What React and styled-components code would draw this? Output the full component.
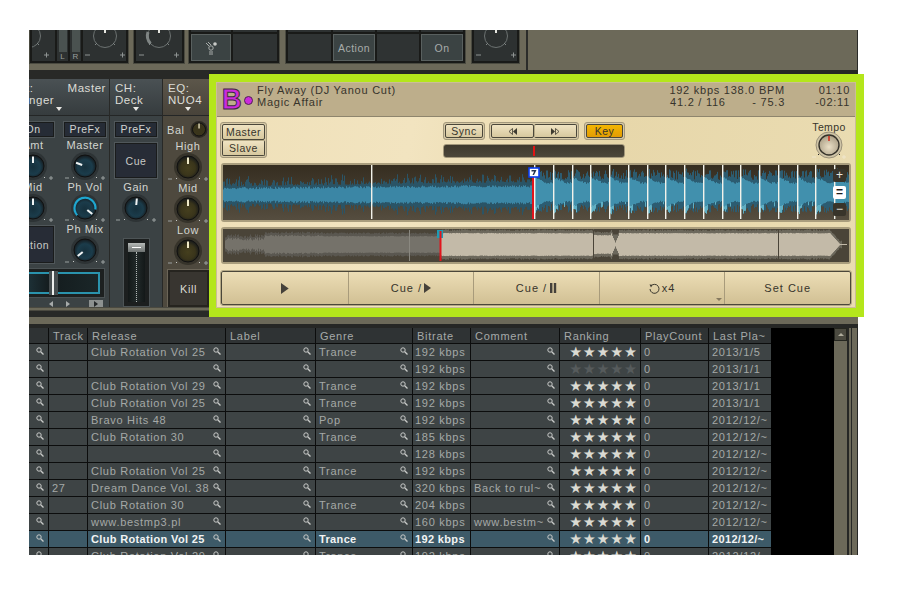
import React, { useMemo } from 'react';
import styled, { createGlobalStyle } from 'styled-components';

const GlobalStyle = createGlobalStyle`
  body {
    margin: 0;
    background: #fff;
    font-family: 'Liberation Sans', Arial, sans-serif;
  }
`;

const Page = styled.div`
  width: 903px;
  height: 598px;
  padding: 30px 0 0 29px;
  box-sizing: border-box;
  overflow: hidden;
`;

const Window = styled.div`
  width: 829px;
  height: 525px;
  display: flex;
  flex-direction: column;
`;

/* top strip */
const TopStrip = styled.div`
  height: 40px;
  flex: none;
  display: flex;
  align-items: flex-start;
  overflow: hidden;
  background: #6c6959;
  border-right: 1px solid #2a2b29;
  box-sizing: border-box;
`;

const Group = styled.div`
  width: ${({ $w }) => $w}px;
  height: 34px;
  margin-left: ${({ $ml }) => $ml || 0}px;
  flex: none;
  box-sizing: border-box;
  display: flex;
  gap: 2px;
  padding: 0 2px 2px;
  background: #191a18;
  border: 1px solid #4a4a40;
  border-top: 0;
`;

const TopCell = styled.div`
  flex: ${({ $w }) => ($w ? `0 0 ${$w}px` : 1)};
  position: relative;
  background: #2d3131;
  overflow: hidden;
  display: flex;
  align-items: center;
  justify-content: center;
`;

const ShiftedKnob = styled.div`
  margin-left: -30px;
`;

const StackCell = styled.div`
  flex: 0 0 ${({ $w }) => $w}px;
  display: flex;
  flex-direction: column;
  gap: 2px;
`;

const TopLip = styled.div`
  height: 2px;
  background: #2d3131;
`;

const TopButton = styled.div`
  flex: 1;
  box-sizing: border-box;
  border: ${({ $on }) => ($on ? '1px solid #59605f' : '0')};
  background: ${({ $on }) => ($on ? '#3b4343' : '#2f3333')};
  color: #a7acaa;
  font-size: 10.5px;
  letter-spacing: 0.5px;
  display: flex;
  align-items: center;
  justify-content: center;
`;

const MeterCell = styled.div`
  flex: 0 0 ${({ $w }) => $w}px;
  background: #2d3131;
  display: flex;
  flex-direction: column;
  align-items: center;
  color: #9a9f9d;
  font-size: 8px;
  line-height: 9px;
`;

const MeterBar = styled.div`
  flex: 1;
  width: 8px;
  background: #4a5250;
`;

const Divider = styled.div`
  width: 2px;
  height: 40px;
  margin-left: 6px;
  background: #2b2c2a;
`;

/* middle row */
const MidRow = styled.div`
  height: 247px;
  flex: none;
  display: flex;
  align-items: flex-start;
  background: linear-gradient(#262725 0, #262725 4px, #413f36 5px, #413f36 9px, #262725 9px);
  width: 829px;
`;

const Mixer = styled.div`
  width: 180px;
  height: 247px;
  flex: none;
  padding-top: 9px;
  box-sizing: border-box;
  display: flex;
  gap: 1px;
  overflow: hidden;
  background: linear-gradient(to top, #282927 0, #282927 6px, #6c6959 7px, #6c6959 9px, #282927 10px);
`;

const Strip = styled.div`
  width: ${({ $w }) => $w}px;
  height: 228px;
  flex: none;
  overflow: hidden;
  background: ${({ $brown }) => ($brown ? '#4e493e' : '#3b4244')};
  color: #d3d5d0;
  font-size: 11px;
  letter-spacing: 0.55px;
`;

const StripHead = styled.div`
  height: 37px;
  box-sizing: border-box;
  padding: 3px 0 0 ${({ $flush }) => ($flush ? 0 : 5)}px;
  position: relative;
  line-height: 12px;
  background: linear-gradient(${({ $brown }) => ($brown ? '#5c564a, #48433a' : '#4a5154, #363c3e')});
  border-bottom: 1px solid #242626;
  color: #dcdcd6;
  font-size: 11.5px;
`;

const HeadLine = styled.div`
  margin-left: ${({ $shift }) => $shift || 0}px;
  white-space: nowrap;
`;

const HeadArrow = styled.i`
  position: absolute;
  left: ${({ $x }) => $x}px;
  bottom: 4px;
  border: 3px solid transparent;
  border-top: 4px solid #e8e8e4;
  border-bottom: 0;
`;

const HeadRight = styled.span`
  position: absolute;
  top: 3px;
  right: 3px;
`;

const FxBody = styled.div`
  display: flex;
  width: 104px;
  margin-left: -22px;
`;

const FxCol = styled.div`
  width: 52px;
  display: flex;
  flex-direction: column;
  align-items: center;
  padding-top: 6px;
`;

const SmallBtn = styled.div`
  width: ${({ $w }) => $w || 42}px;
  height: 15px;
  box-sizing: border-box;
  border: 1px solid #191b1b;
  outline: 1px solid #50575a;
  background: #262c36;
  color: #d2d4d0;
  font-size: 10.5px;
  line-height: 13px;
  text-align: center;
`;

const KnobLabel = styled.div`
  height: 13px;
  line-height: 13px;
  margin-top: ${({ $mt }) => $mt || 0}px;
  text-align: center;
  white-space: nowrap;
  font-size: 11px;
`;

const BigPad = styled.div`
  width: ${({ $w }) => $w || 42}px;
  height: ${({ $h }) => $h}px;
  margin-top: ${({ $mt }) => $mt || 0}px;
  flex: none;
  box-sizing: border-box;
  border: 1px solid #1a1c1c;
  outline: 1px solid #50575a;
  background: #272c36;
  color: #c8cac6;
  font-size: 10.5px;
  display: flex;
  align-items: center;
  justify-content: center;
`;

const XSlider = styled.div`
  width: 76px;
  height: 30px;
  margin-top: 2px;
  padding: 3px 4px 3px 0;
  box-sizing: border-box;
  background: #1d2020;
  border: 1px solid #4b5254;
  border-left: 0;
`;

const XTrack = styled.div`
  position: relative;
  height: 100%;
  border: 2px solid #2a93ad;
  border-left: 0;
  box-sizing: border-box;
  background: linear-gradient(90deg, #1d3036, #141c1e 30%, #1a2628);
`;

const XThumb = styled.i`
  position: absolute;
  left: 20px;
  top: -3px;
  bottom: -3px;
  width: 9px;
  background: #464d4f;
  &::after {
    content: '';
    position: absolute;
    left: 3px;
    top: 0;
    bottom: 0;
    width: 2px;
    background: #eceeec;
  }
`;

const ArrowRow = styled.div`
  display: flex;
  align-items: center;
  height: 9px;
  margin-top: 1px;
  gap: 13px;
  padding-left: 20px;
`;

const TinyArrow = styled.i`
  border: 3px solid transparent;
  ${({ $dir }) =>
    $dir === 'l' ? 'border-right: 4px solid #a7abaa; border-left: 0;' : 'border-left: 4px solid #a7abaa; border-right: 0;'}
`;

const ArrowPad = styled.div`
  width: 14px;
  height: 7px;
  background: #8d9190;
  display: flex;
  align-items: center;
  justify-content: center;
  margin-left: 6px;
  & > i {
    border-left-color: #25282a;
  }
`;

const StripBody = styled.div`
  display: flex;
  flex-direction: column;
  align-items: center;
  padding-top: 6px;
`;

const Fader = styled.div`
  width: 27px;
  height: 69px;
  margin-top: 14px;
  padding: 4px;
  box-sizing: border-box;
  background: #1c1f1f;
  border: 1px solid #4d5456;
  display: flex;
  flex-direction: column;
`;

const FaderCap = styled.div`
  height: 9px;
  background: linear-gradient(#b6bab8, #6c7170);
  display: flex;
  align-items: center;
  justify-content: center;
  &::after {
    content: '';
    width: 9px;
    height: 1px;
    background: #fff;
  }
`;

const FaderTrack = styled.div`
  flex: 1;
  background: linear-gradient(90deg, #131818, #222a2a, #131818);
  display: flex;
  justify-content: center;
  &::after {
    content: '';
    border-left: 1px dotted #b5bab8;
  }
`;

const EqRow = styled.div`
  display: flex;
  align-items: center;
  justify-content: space-between;
  width: 46px;
  padding-left: 4px;
  box-sizing: border-box;
  height: 16px;
  align-self: flex-start;
`;

const KillPad = styled.div`
  width: 41px;
  height: 37px;
  margin: 3px 0 0 5px;
  align-self: flex-start;
  flex: none;
  box-sizing: border-box;
  border: 2px solid #26241f;
  outline: 1px solid #6b6558;
  background: #383530;
  color: #d9d9d3;
  font-size: 11px;
  display: flex;
  align-items: center;
  justify-content: center;
`;

/* deck */
const Deck = styled.div`
  width: 655px;
  height: 243px;
  margin-top: 4px;
  padding: 8px 8px 9px 7px;
  box-sizing: border-box;
  flex: none;
  background: #b4e61b;
  position: relative;
`;

const DeckInner = styled.div`
  height: 100%;
  display: flex;
  flex-direction: column;
  background: linear-gradient(100deg, #efe0b8, #f2e4c0 30%, #e7d7aa 60%, #eadcb2);
  color: #37342b;
  font-size: 11px;
  letter-spacing: 0.75px;
  border-top: 1px solid #5c1c78;
  box-sizing: border-box;
  outline: 1px solid #cbbd98;
  outline-offset: -1px;
`;

const DeckHead = styled.div`
  height: 34px;
  flex: none;
  box-sizing: border-box;
  display: flex;
  align-items: center;
  padding: 0 6px 6px 5px;
  background: #bdae8b;
  border-bottom: 1px solid #8e856d;
  line-height: 11.5px;
`;

const DeckLetter = styled.div`
  width: 20px;
  height: 22px;
  flex: none;
  color: #cb2bdc;
  -webkit-text-stroke: 1px #3d2a40;
  font-size: 30px;
  font-weight: 700;
  letter-spacing: 0;
  line-height: 22px;
  text-align: center;
  transform: scaleX(0.92);
  margin-top: 4px;
`;

const DeckDot = styled.div`
  width: 9px;
  height: 9px;
  margin: 7px 0 0 3px;
  flex: none;
  border-radius: 50%;
  background: #cb2bdc;
  border: 1px solid #4e2450;
  box-sizing: border-box;
`;

const TrackTitle = styled.div`
  margin-left: 4px;
  flex: 1;
  white-space: nowrap;
`;

const TrackStat = styled.div`
  text-align: right;
  white-space: pre;
  width: ${({ $w }) => $w}px;
`;

const DeckBody = styled.div`
  flex: 1;
  display: flex;
  flex-direction: column;
  padding: 5px 5px 0 5px;
  gap: 5px;
  min-height: 0;
`;

const Controls = styled.div`
  height: 36px;
  flex: none;
  display: flex;
  align-items: flex-start;
  margin-left: -1px;
`;

const Bevel = styled.div`
  flex: none;
  width: ${({ $w }) => ($w ? `${$w}px` : 'auto')};
  margin-left: ${({ $ml }) => $ml || 0}px;
  height: ${({ $h }) => $h}px;
  box-sizing: border-box;
  padding: 1px;
  display: flex;
  flex-direction: ${({ $col }) => ($col ? 'column' : 'row')};
  background: #d6c9a6;
  border: 1px solid #a2977b;
  border-radius: 3px;
`;

const ToggleBtn = styled.div`
  flex: 1;
  display: flex;
  align-items: center;
  justify-content: center;
  gap: 2px;
  box-sizing: border-box;
  border: 1px solid #4b473a;
  ${({ $joined }) => $joined && 'border-left: 1px solid #b5a986;'}
  ${({ $stack }) => $stack && 'border-top: 1px solid #b5a986;'}
  border-radius: 2px;
  background: ${({ $on }) => ($on ? 'linear-gradient(#f3b602, #e39c03)' : 'linear-gradient(#efe3c2, #d7c89e)')};
  font-size: 10.5px;
  letter-spacing: 0.5px;
`;

const CenterCol = styled.div`
  width: 182px;
  margin-left: 176px;
  display: flex;
  flex-direction: column;
  gap: 4px;
`;

const CenterRow = styled.div`
  display: flex;
`;

const PitchBar = styled.div`
  height: 14px;
  flex: none;
  box-sizing: border-box;
  border: 1px solid #a2977b;
  border-radius: 3px;
  background: linear-gradient(#3e392e, #4c473a);
  display: flex;
  align-items: center;
  justify-content: center;
  &::after {
    content: '';
    width: 2px;
    height: 10px;
    background: #e01414;
  }
`;

const TempoBox = styled.div`
  margin-left: auto;
  margin-right: 2px;
  width: 40px;
  display: flex;
  flex-direction: column;
  align-items: center;
  line-height: 10px;
  font-size: 10.5px;
  letter-spacing: 0.4px;
`;

const WaveFrame = styled.div`
  height: ${({ $h }) => $h}px;
  flex: none;
  position: relative;
  box-sizing: border-box;
  border: 2px solid #a99d7d;
  border-radius: 3px;
  background: #2e2a20;
  overflow: hidden;
  & > svg {
    display: block;
  }
`;

const ZoomBtn = styled.div`
  position: absolute;
  right: 3px;
  top: ${({ $top }) => $top}px;
  width: 13px;
  height: 13px;
  border-radius: 2px;
  background: ${({ $white }) => ($white ? '#fff' : '#38342a')};
  color: ${({ $white }) => ($white ? '#1c1c1c' : '#e8e8e0')};
  font-size: 12px;
  font-weight: ${({ $white }) => ($white ? 700 : 400)};
  letter-spacing: 0;
  line-height: 12px;
  text-align: center;
`;

const ButtonBar = styled.div`
  height: 34px;
  flex: none;
  display: grid;
  grid-template-columns: repeat(5, 1fr);
  box-sizing: border-box;
  border: 1px solid #4b473a;
  outline: 1px solid #b5a986;
  border-radius: 2px;
  background: linear-gradient(#ecddb5, #d1c094);
  margin-top: 2px;
`;

const BarButton = styled.div`
  position: relative;
  display: flex;
  align-items: center;
  justify-content: center;
  gap: 2px;
  border-left: ${({ $first }) => ($first ? 0 : '1px solid #a89b7b')};
  font-size: 11px;
  letter-spacing: 1px;
`;

const DropMark = styled.i`
  position: absolute;
  right: 2px;
  bottom: 3px;
  border: 3px solid transparent;
  border-top: 3px solid #85795f;
  border-bottom: 0;
`;

/* browser */
const Browser = styled.div`
  height: 238px;
  flex: none;
  box-sizing: border-box;
  overflow: hidden;
  display: flex;
  flex-direction: column;
  background: #6c6959;
  border-top: 7px solid #6c6959;
`;

const BrowserRow = styled.div`
  flex: 1;
  min-height: 0;
  display: flex;
  background: #000;
  border-top: 4px solid #262725;
`;

const TrackTable = styled.div`
  width: 742px;
  flex: none;
  display: grid;
  grid-template-columns: 19px 38px 137px 89px 96px 57px 88px 80px 67px 62px;
  grid-template-rows: 15px;
  grid-auto-rows: 16px;
  gap: 1px;
  align-content: start;
  background: #0c0d0d;
  font-size: 11px;
  letter-spacing: 0.72px;
`;

const HeadCell = styled.div`
  height: 15px;
  line-height: 16px;
  padding-left: 4px;
  overflow: hidden;
  white-space: nowrap;
  background: #2f3334;
  color: #a6aaa9;
`;

const Cell = styled.div`
  position: relative;
  line-height: 16px;
  padding-left: ${({ $pl }) => $pl ?? 3}px;
  overflow: hidden;
  white-space: nowrap;
  background: ${({ $sel }) => ($sel ? '#3d5a68' : '#3e4445')};
  color: ${({ $sel }) => ($sel ? '#f2f4f4' : '#a5a9a7')};
  font-weight: ${({ $sel }) => ($sel ? 700 : 400)};
  letter-spacing: ${({ $sel }) => ($sel ? '0.35px' : 'inherit')};
`;

const Lens = styled.svg`
  position: absolute;
  right: 4px;
  top: 3px;
`;

const Stars = styled.div`
  position: relative;
  height: 16px;
  padding-left: 7px;
  box-sizing: border-box;
  background: ${({ $sel }) => ($sel ? '#3d5a68' : '#3e4445')};
  color: ${({ $dim }) => ($dim ? '#565b5c' : '#dadad2')};
  font-family: 'DejaVu Sans', sans-serif;
  font-size: 14.5px;
  line-height: 16px;
  letter-spacing: 0.75px;
  text-align: center;
  overflow: hidden;
`;

const BlackArea = styled.div`
  flex: 1;
  background: #000;
`;

const ScrollTrack = styled.div`
  width: 13px;
  flex: none;
  background: #6c6959;
`;

const ScrollBtn = styled.div`
  height: 13px;
  box-sizing: border-box;
  border: 1px solid #25261f;
  background: #4b4a40;
  display: flex;
  align-items: center;
  justify-content: center;
  &::after {
    content: '';
    border: 3px solid transparent;
    border-bottom: 3px solid #b0ad9d;
    border-top: 0;
  }
`;

const FrameEdge = styled.div`
  width: 11px;
  flex: none;
  background: linear-gradient(
    90deg,
    #262725 0 2px,
    #6c6959 2px 4px,
    #262725 4px 5px,
    #6c6959 5px 10px,
    #262725 10px 11px
  );
`;

const Knob = ({ tone = 'blue', angle = 0, arc = false }) => {
  const olive = tone === 'olive';
  const id = `knob-${tone}`;
  const rad = ((angle - 90) * Math.PI) / 180;
  const cx = 22;
  const cy = 14;
  const x1 = cx + Math.cos(rad) * 3;
  const y1 = cy + Math.sin(rad) * 3;
  const x2 = cx + Math.cos(rad) * 9.5;
  const y2 = cy + Math.sin(rad) * 9.5;
  return (
    <svg width='44' height='30' viewBox='0 0 44 30' style={{ display: 'block', flex: 'none' }}>
      <defs>
        <radialGradient id={id} cx='50%' cy='55%' r='55%'>
          <stop offset='0%' stopColor={olive ? '#453f1e' : '#16303c'} />
          <stop offset='60%' stopColor={olive ? '#3a351b' : '#1b3c4b'} />
          <stop offset='100%' stopColor='#15181a' />
        </radialGradient>
      </defs>
      <circle cx={cx} cy={cy} r={14} fill={olive ? '#36332a' : '#2d3335'} />
      <circle cx={cx} cy={cy} r={11} fill={`url(#${id})`} stroke='#111' />
      {arc && <path d='M14.2 21.2 A10.5 10.5 0 1 1 32.4 15.5' fill='none' stroke='#1fa6cf' strokeWidth='2.2' />}
      <line x1={x1} y1={y1} x2={x2} y2={y2} stroke={olive ? '#efe9c8' : '#f1f4f4'} strokeWidth='2' />
      <path d='M2 26h4M38 26h4M40 24v4' stroke='#9aa09f' strokeWidth='1' />
      <rect x='10' y='25' width='1' height='1' fill='#c9cbc8' />
      <rect x='33' y='25' width='1' height='1' fill='#c9cbc8' />
    </svg>
  );
};

const BalKnob = () => (
  <svg width='20' height='18' viewBox='0 0 20 18' style={{ display: 'block', flex: 'none' }}>
    <circle cx='10' cy='8.5' r='8.5' fill='#2d2a22' />
    <circle cx='10' cy='8.5' r='6.5' fill='#3a351b' stroke='#111' />
    <rect x='9.4' y='2.5' width='1.3' height='5' fill='#efe9c8' />
  </svg>
);

const OutlineKnob = ({ heavy }) => (
  <svg width='46' height='32' viewBox='0 0 46 32' style={{ display: 'block', flex: 'none' }}>
    <circle cx='23' cy='6' r='11.5' fill='none' stroke='#6c7271' />
    {heavy && <path d='M14.5 13.5 A11.5 11.5 0 0 1 12 2' fill='none' stroke='#7f8584' strokeWidth='3' />}
    <rect x='22' y='0' width='2' height='3' fill='#e6e6e0' />
    <path d='M13 15l2-2M33 15l-2-2' stroke='#7f8584' />
    <path d='M3 25h5M38 25h5M40.5 22.5v5' stroke='#8f9493' />
  </svg>
);

const TempoKnob = () => (
  <svg width='34' height='30' viewBox='0 0 34 30' style={{ display: 'block', marginTop: -1 }}>
    <defs>
      <radialGradient id='tempo-cap' cx='50%' cy='60%' r='60%'>
        <stop offset='0%' stopColor='#eadfc6' />
        <stop offset='100%' stopColor='#a89c83' />
      </radialGradient>
    </defs>
    <circle cx='17' cy='14' r='13' fill='#cfc4a6' stroke='#9b917a' />
    <circle cx='17' cy='14' r='10' fill='url(#tempo-cap)' stroke='#35322a' strokeWidth='1.4' />
    <line x1='17' y1='5' x2='17' y2='10' stroke='#d42010' strokeWidth='1.4' />
    <path d='M6 23l1 1M28 23l-1 1' stroke='#222' />
    <path d='M0 26h4M30 26h4M32 24v4' stroke='#efe6cc' />
  </svg>
);

const NetIcon = () => (
  <svg width='14' height='14' viewBox='0 0 14 14'>
    <path d='M2 2l3 3M4 1l3 3' stroke='#a9adab' strokeWidth='1' />
    <circle cx='11' cy='3' r='1.8' fill='#c9cbc8' />
    <circle cx='7' cy='7' r='2.2' fill='none' stroke='#a9adab' />
    <path d='M5 11h4M5 13h4' stroke='#a9adab' />
  </svg>
);

const PlayIcon = ({ h = 11 }) => (
  <svg width={h * 0.7} height={h} viewBox='0 0 7 10' style={{ display: 'block' }}>
    <path d='M0 0L7 5L0 10Z' fill='#45413a' />
  </svg>
);

const PauseIcon = () => (
  <svg width='8' height='10' viewBox='0 0 8 10' style={{ display: 'block' }}>
    <path d='M1 0h2.4v10H1zM4.8 0h2.4v10H4.8z' fill='#45413a' />
  </svg>
);

const LoopIcon = () => (
  <svg width='11' height='11' viewBox='0 0 11 11' style={{ display: 'block' }}>
    <path d='M2 3A4.5 4.5 0 1 1 1 6' fill='none' stroke='#3d3a30' strokeWidth='1' />
    <path d='M0.5 1.5L3.6 1.8L2 4.4Z' fill='#3d3a30' />
  </svg>
);

const NudgeIcon = ({ flip }) => (
  <svg width='9' height='7' viewBox='0 0 9 7' style={{ display: 'block', transform: flip ? 'scaleX(-1)' : 'none' }}>
    <path d='M4.5 0.5L1 3.5L4.5 6.5Z' fill='none' stroke='#3d3a30' strokeWidth='0.8' />
    <path d='M9 0L5 3.5L9 7Z' fill='#3d3a30' />
  </svg>
);

const LensIcon = () => (
  <Lens width='8' height='8' viewBox='0 0 8 8'>
    <circle cx='3' cy='3' r='2.2' fill='none' stroke='#c8cac8' strokeWidth='1' />
    <path d='M4.7 4.7L7.5 7.5' stroke='#c8cac8' strokeWidth='1.3' />
  </Lens>
);

// small seeded generator so the wave looks the same on every load
const makeRandom = (seed) => {
  let s = seed;
  return () => {
    s = (s * 16807) % 2147483647;
    return s / 2147483647;
  };
};

const bars = (list, fn) =>
  list
    .map((x) => {
      const [top, bottom] = fn(x);
      return `M${x + 0.5} ${top}V${bottom}`;
    })
    .join('');

const BEAT_LINES = [148];
for (let x = 311; x < 620; x += 18.75) BEAT_LINES.push(Math.round(x));

const MainWave = () => {
  const paths = useMemo(() => {
    const rnd = makeRandom(4711);
    const xs = Array.from({ length: 626 }, (_, i) => i);
    const amp = xs.map((x) => {
      const right = x > 309;
      const phase = ((x - 311 + 1000 * 18.75) % 18.75) / 18.75;
      const pulse = right ? Math.max(0, 1 - phase * 1.5) : 0;
      return {
        cy: right ? 28 : 30,
        inner: right ? 9 + pulse * 6 + rnd() * 2 : 5.5 + Math.min(2, x / 120) + rnd() * 2.4,
        outer: right ? 13 + rnd() * 10 + pulse * 2 : 8.5 + Math.min(4, x / 70) + rnd() * rnd() * 11,
        spike: right && (pulse > 0.6 || rnd() > 0.95) ? 2 + rnd() * 6 : 0,
      };
    });
    const left = xs.filter((x) => x <= 309);
    const right = xs.filter((x) => x > 309);
    return {
      playedOuter: bars(left, (x) => [amp[x].cy - amp[x].outer, amp[x].cy + amp[x].outer * 0.95]),
      playedInner: bars(left, (x) => [amp[x].cy - amp[x].inner, amp[x].cy + amp[x].inner * 0.95]),
      nextOuter: bars(right, (x) => [amp[x].cy - amp[x].outer, amp[x].cy + amp[x].outer * 0.85]),
      nextInner: bars(right, (x) => [amp[x].cy - amp[x].inner, amp[x].cy + amp[x].inner * 0.85]),
      nextSpike: bars(
        right.filter((x) => amp[x].spike > 0),
        (x) => [amp[x].cy + amp[x].inner * 0.85, amp[x].cy + amp[x].inner * 0.85 + amp[x].spike]
      ),
    };
  }, []);
  return (
    <svg width='626' height='55' viewBox='0 0 626 55'>
      <defs>
        <linearGradient id='wave-bg' x1='0' y1='0' x2='0' y2='1'>
          <stop offset='0%' stopColor='#352d20' />
          <stop offset='100%' stopColor='#554d3f' />
        </linearGradient>
      </defs>
      <rect width='626' height='55' fill='url(#wave-bg)' />
      <path d={paths.playedOuter} stroke='#2a5466' fill='none' />
      <path d={paths.playedInner} stroke='#3b86a5' fill='none' />
      <path d={paths.nextOuter} stroke='#2c5c71' fill='none' />
      <path d={paths.nextInner} stroke='#4190ad' fill='none' />
      <path d={paths.nextSpike} stroke='#5fafc4' fill='none' />
      {BEAT_LINES.map((x) => (
        <rect key={x} x={x} y='0' width='1.4' height='54' fill='#f2f2ea' />
      ))}
      <rect x='309' y='4' width='2' height='50' fill='#e2141c' />
      <rect x='306' y='3' width='10' height='9' fill='#fff' stroke='#0a3ef0' strokeWidth='1.6' />
      <path d='M308.5 5h5l-2.5 5h-1.5l1.6-3.4h-2.6z' fill='#23324f' />
    </svg>
  );
};

const OverviewWave = () => {
  const paths = useMemo(() => {
    const rnd = makeRandom(977);
    const xs = Array.from({ length: 622 }, (_, i) => i + 2);
    const cy = 15.5;
    const shape = (x) => {
      if (x < 42) return 4 + rnd() * 3;
      if (x < 100) return 8 + rnd() * 1.5;
      if (x < 217) return 8 + rnd() * 0.6;
      if (Math.abs(x - 392) < 4) return 2 + Math.abs(x - 392) * 2.2;
      if (x > 607) return Math.max(0.5, 11 - (x - 607) * 1.1);
      if (x > 370 && x < 388) return 9 + rnd() * 0.6;
      return 11 + rnd() * 0.6;
    };
    const amp = xs.map((x) => {
      const inner = shape(x);
      return { x, inner, outer: x > 618 ? inner : Math.max(inner + 2.5 + rnd() * 1.2, x > 385 && x < 399 ? 10 : 0) };
    });
    const build = (from, to, key) =>
      bars(
        amp.filter((a) => a.x >= from && a.x < to).map((a) => a.x),
        (x) => {
          const a = amp[x - 2];
          return [cy - a[key], cy + a[key]];
        }
      );
    return {
      beforeOuter: build(0, 217, 'outer'),
      beforeInner: build(0, 217, 'inner'),
      afterOuter: build(217, 630, 'outer'),
      afterInner: build(217, 630, 'inner'),
    };
  }, []);
  return (
    <svg width='626' height='33' viewBox='0 0 626 33'>
      <rect width='626' height='33' fill='#4a4438' />
      <path d={paths.beforeOuter} stroke='#5a5750' fill='none' />
      <path d={paths.beforeInner} stroke='#75726a' fill='none' />
      <path d={paths.afterOuter} stroke='#6c685c' fill='none' />
      <path d={paths.afterInner} stroke='#c3baa8' fill='none' />
      <rect x='186' y='1' width='1' height='31' fill='#8a8880' />
      <rect x='370' y='1' width='1' height='31' fill='#4a4438' />
      <rect x='555' y='1' width='1' height='31' fill='#4a4438' />
      <rect x='214' y='1' width='6' height='8' fill='#1c9cb4' />
      <rect x='216.5' y='2' width='2' height='30' fill='#e2141c' />
    </svg>
  );
};

const TRACKS = [
  { release: 'Club Rotation Vol 25', genre: 'Trance', bitrate: '192 kbps', played: '2013/1/5' },
  { bitrate: '192 kbps', played: '2013/1/1', dim: true },
  { release: 'Club Rotation Vol 29', genre: 'Trance', bitrate: '192 kbps', played: '2013/1/1' },
  { release: 'Club Rotation Vol 25', genre: 'Trance', bitrate: '192 kbps', played: '2013/1/1' },
  { release: 'Bravo Hits 48', genre: 'Pop', bitrate: '192 kbps', played: '2012/12/~' },
  { release: 'Club Rotation 30', genre: 'Trance', bitrate: '185 kbps', played: '2012/12/~' },
  { bitrate: '128 kbps', played: '2012/12/~' },
  { release: 'Club Rotation Vol 25', genre: 'Trance', bitrate: '192 kbps', played: '2012/12/~' },
  { track: '27', release: 'Dream Dance Vol. 38', bitrate: '320 kbps', comment: 'Back to rul~', played: '2012/12/~' },
  { release: 'Club Rotation 30', genre: 'Trance', bitrate: '204 kbps', played: '2012/12/~' },
  { release: 'www.bestmp3.pl', bitrate: '160 kbps', comment: 'www.bestm~', played: '2012/12/~' },
  { release: 'Club Rotation Vol 25', genre: 'Trance', bitrate: '192 kbps', played: '2012/12/~', sel: true },
  { release: 'Club Rotation Vol 29', genre: 'Trance', bitrate: '192 kbps', played: '2012/12/~' },
];

const COLUMNS = ['', 'Track', 'Release', 'Label', 'Genre', 'Bitrate', 'Comment', 'Ranking', 'PlayCount', 'Last Pla~'];

const App = () => {
  return (
    <Page>
      <GlobalStyle />
      <Window>
        <TopStrip>
          <Group $w={100}>
            <TopCell $w={23}>
              <ShiftedKnob>
                <OutlineKnob />
              </ShiftedKnob>
            </TopCell>
            <MeterCell $w={11}>
              <MeterBar />L
            </MeterCell>
            <MeterCell $w={11}>
              <MeterBar />R
            </MeterCell>
            <TopCell>
              <OutlineKnob />
            </TopCell>
          </Group>
          <Group $w={52} $ml={4}>
            <TopCell>
              <OutlineKnob heavy />
            </TopCell>
          </Group>
          <Group $w={92} $ml={3}>
            <StackCell $w={40}>
              <TopLip />
              <TopButton $on>
                <NetIcon />
              </TopButton>
            </StackCell>
            <StackCell $w={44}>
              <TopLip />
              <TopButton />
            </StackCell>
          </Group>
          <Group $w={181} $ml={5}>
            <StackCell $w={43}>
              <TopLip />
              <TopButton />
            </StackCell>
            <StackCell $w={42}>
              <TopLip />
              <TopButton $on>Action</TopButton>
            </StackCell>
            <StackCell $w={42}>
              <TopLip />
              <TopButton />
            </StackCell>
            <StackCell $w={42}>
              <TopLip />
              <TopButton $on>On</TopButton>
            </StackCell>
          </Group>
          <Group $w={49} $ml={5}>
            <TopCell>
              <OutlineKnob />
            </TopCell>
          </Group>
          <Divider />
        </TopStrip>

        <MidRow>
          <Mixer>
            <Strip $w={80}>
              <StripHead $flush>
                <HeadLine $shift={-3}>t:</HeadLine>
                <HeadRight>Master</HeadRight>
                <HeadLine>nger</HeadLine>
                <HeadArrow $x={27} />
              </StripHead>
              <FxBody>
                <FxCol>
                  <SmallBtn>On</SmallBtn>
                  <KnobLabel $mt={2}>Amt</KnobLabel>
                  <Knob angle={0} />
                  <KnobLabel $mt={-1}>Mid</KnobLabel>
                  <Knob angle={0} />
                  <BigPad $h={37} $mt={2}>
                    Action
                  </BigPad>
                </FxCol>
                <FxCol>
                  <SmallBtn>PreFx</SmallBtn>
                  <KnobLabel $mt={2}>Master</KnobLabel>
                  <Knob angle={-70} />
                  <KnobLabel $mt={-1}>Ph Vol</KnobLabel>
                  <Knob angle={130} arc />
                  <KnobLabel $mt={-1}>Ph Mix</KnobLabel>
                  <Knob angle={-130} />
                </FxCol>
              </FxBody>
              <XSlider>
                <XTrack>
                  <XThumb />
                </XTrack>
              </XSlider>
              <ArrowRow>
                <TinyArrow $dir='l' />
                <TinyArrow $dir='r' />
                <ArrowPad>
                  <TinyArrow $dir='r' />
                </ArrowPad>
              </ArrowRow>
            </Strip>
            <Strip $w={52}>
              <StripHead>
                CH:
                <br />
                Deck
                <HeadArrow $x={23} />
              </StripHead>
              <StripBody>
                <SmallBtn>PreFx</SmallBtn>
                <BigPad $h={35} $mt={6}>
                  Cue
                </BigPad>
                <KnobLabel $mt={3}>Gain</KnobLabel>
                <Knob angle={5} />
                <Fader>
                  <FaderCap />
                  <FaderTrack />
                </Fader>
              </StripBody>
            </Strip>
            <Strip $w={50} $brown>
              <StripHead $brown>
                EQ:
                <br />
                NUO4
                <HeadArrow $x={22} />
              </StripHead>
              <StripBody>
                <EqRow>
                  <span>Bal</span>
                  <BalKnob />
                </EqRow>
                <KnobLabel $mt={2}>High</KnobLabel>
                <Knob tone='olive' angle={0} />
                <KnobLabel $mt={-1}>Mid</KnobLabel>
                <Knob tone='olive' angle={0} />
                <KnobLabel $mt={-1}>Low</KnobLabel>
                <Knob tone='olive' angle={0} />
                <KillPad>Kill</KillPad>
              </StripBody>
            </Strip>
          </Mixer>

          <Deck>
            <DeckInner>
              <DeckHead>
                <DeckLetter>B</DeckLetter>
                <DeckDot />
                <TrackTitle>
                  Fly Away (DJ Yanou Cut)
                  <br />
                  Magic Affair
                </TrackTitle>
                <TrackStat $w={220}>
                  192 kbps 138.0 BPM
                  <br />
                  41.2 / 116       - 75.3
                </TrackStat>
                <TrackStat $w={65}>
                  01:10
                  <br />
                  -02:11
                </TrackStat>
              </DeckHead>
              <DeckBody>
                <Controls>
                  <Bevel $w={47} $h={36} $col>
                    <ToggleBtn>Master</ToggleBtn>
                    <ToggleBtn $stack>Slave</ToggleBtn>
                  </Bevel>
                  <CenterCol>
                    <CenterRow>
                      <Bevel $w={42} $h={18}>
                        <ToggleBtn>Sync</ToggleBtn>
                      </Bevel>
                      <Bevel $w={90} $h={18} $ml={4}>
                        <ToggleBtn>
                          <NudgeIcon />
                        </ToggleBtn>
                        <ToggleBtn $joined>
                          <NudgeIcon flip />
                        </ToggleBtn>
                      </Bevel>
                      <Bevel $w={41} $h={18} $ml={5}>
                        <ToggleBtn $on>Key</ToggleBtn>
                      </Bevel>
                    </CenterRow>
                    <PitchBar />
                  </CenterCol>
                  <TempoBox>
                    Tempo
                    <TempoKnob />
                  </TempoBox>
                </Controls>
                <WaveFrame $h={59}>
                  <MainWave />
                  <ZoomBtn $top={4}>+</ZoomBtn>
                  <ZoomBtn $top={21} $white>=</ZoomBtn>
                  <ZoomBtn $top={38}>−</ZoomBtn>
                </WaveFrame>
                <WaveFrame $h={37}>
                  <OverviewWave />
                </WaveFrame>
                <ButtonBar>
                  <BarButton $first>
                    <PlayIcon />
                  </BarButton>
                  <BarButton>
                    Cue /<PlayIcon h={10} />
                  </BarButton>
                  <BarButton>
                    Cue /<PauseIcon />
                  </BarButton>
                  <BarButton>
                    <LoopIcon />x4
                    <DropMark />
                  </BarButton>
                  <BarButton>Set Cue</BarButton>
                </ButtonBar>
              </DeckBody>
            </DeckInner>
          </Deck>
        </MidRow>

        <Browser>
          <BrowserRow>
            <TrackTable>
              {COLUMNS.map((name, i) => (
                <HeadCell key={i}>{name}</HeadCell>
              ))}
              {TRACKS.map((t, i) => (
                <React.Fragment key={i}>
                  <Cell $sel={t.sel}>
                    <LensIcon />
                  </Cell>
                  <Cell $sel={t.sel}>{t.track}</Cell>
                  <Cell $sel={t.sel}>
                    {t.release}
                    <LensIcon />
                  </Cell>
                  <Cell $sel={t.sel}>
                    <LensIcon />
                  </Cell>
                  <Cell $sel={t.sel}>
                    {t.genre}
                    <LensIcon />
                  </Cell>
                  <Cell $sel={t.sel} $pl={2}>
                    {t.bitrate}
                  </Cell>
                  <Cell $sel={t.sel}>
                    {t.comment}
                    <LensIcon />
                  </Cell>
                  <Stars $sel={t.sel} $dim={t.dim}>
                    ★★★★★
                  </Stars>
                  <Cell $sel={t.sel}>0</Cell>
                  <Cell $sel={t.sel}>{t.played}</Cell>
                </React.Fragment>
              ))}
            </TrackTable>
            <BlackArea />
            <ScrollTrack>
              <ScrollBtn />
            </ScrollTrack>
            <FrameEdge />
          </BrowserRow>
        </Browser>
      </Window>
    </Page>
  );
};

export default App;
